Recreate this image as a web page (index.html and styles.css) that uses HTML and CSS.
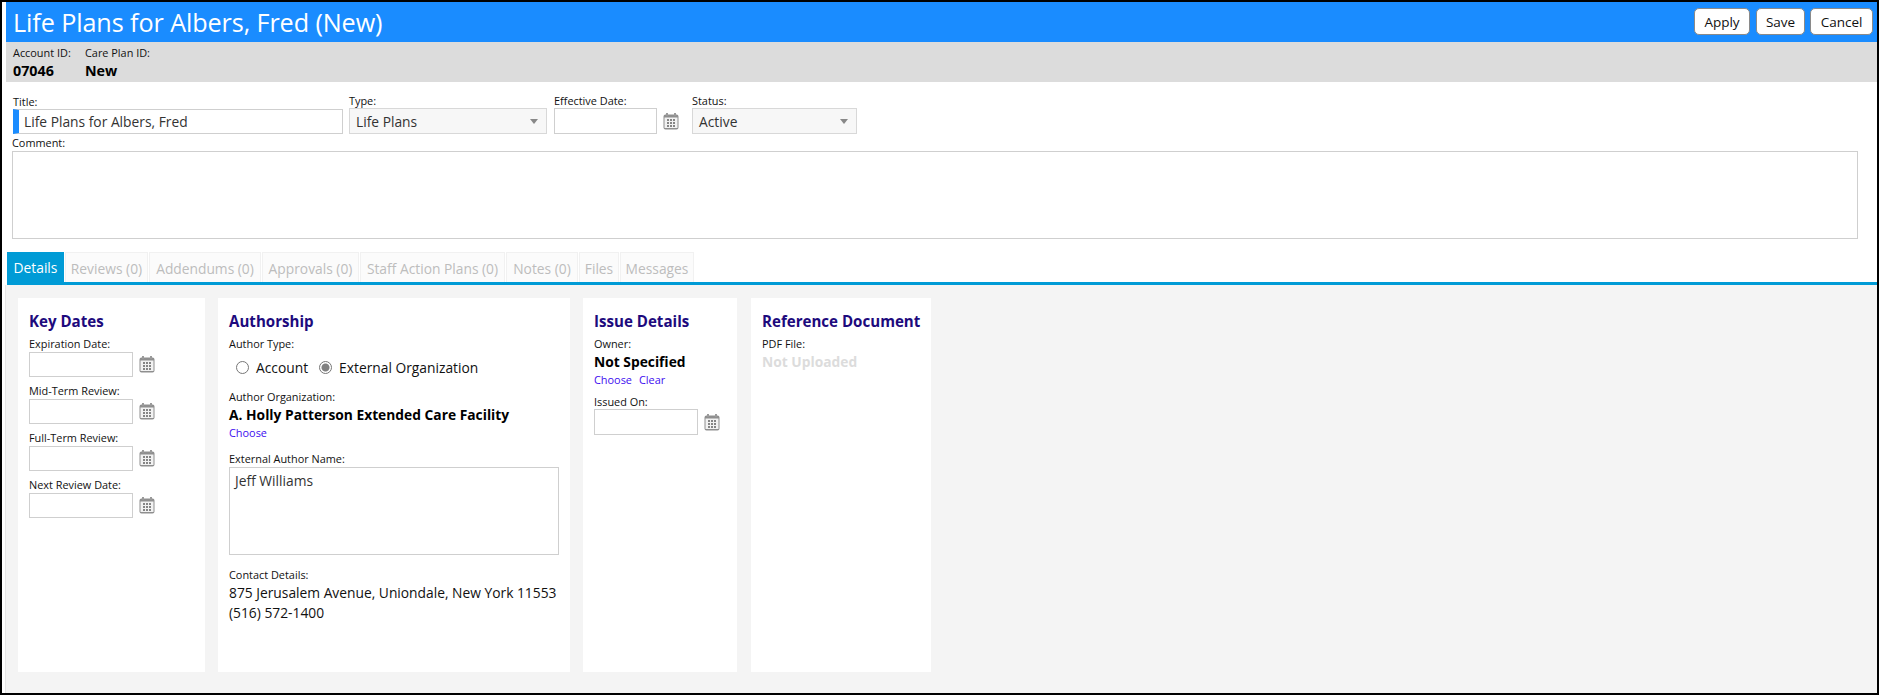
FILE: index.html
```html
<!DOCTYPE html>
<html lang="en">
<head>
<meta charset="utf-8">
<title>Life Plans for Albers, Fred (New)</title>
<link rel="stylesheet" href="styles.css">
</head>
<body>
<svg class="defs" width="0" height="0" aria-hidden="true">
  <symbol id="cal" viewBox="0 0 16 17">
    <path d="M2.5 1.5h11a2 2 0 0 1 2 2v11a2 2 0 0 1-2 2h-11a2 2 0 0 1-2-2v-11a2 2 0 0 1 2-2z" fill="#8f8f8f"/>
    <rect x="1.5" y="4.5" width="13" height="10.5" fill="#f2f2f2"/>
    <rect x="3" y="0" width="2" height="3" fill="#9a9a9a"/>
    <rect x="11" y="0" width="2" height="3" fill="#9a9a9a"/>
    <path d="M4 6h2v2H4zM7 6h2v2H7zM10 6h2v2h-2zM4 9h2v2H4zM7 9h2v2H7zM10 9h2v2h-2zM4 12h2v2H4zM7 12h2v2H7zM10 12h2v2h-2z" fill="#858585"/>
  </symbol>
</svg>
<div class="shell">
  <header class="topbar">
    <h1>Life Plans for Albers, Fred (New)</h1>
    <div class="actions">
      <button class="btn btn-apply">Apply</button>
      <button class="btn btn-save">Save</button>
      <button class="btn btn-cancel">Cancel</button>
    </div>
  </header>
  <section class="ids">
    <div class="id-col id-account"><span class="tiny">Account ID:</span><strong>07046</strong></div>
    <div class="id-col"><span class="tiny">Care Plan ID:</span><strong>New</strong></div>
  </section>
  <section class="form">
    <div class="form-row">
      <div class="field f-title"><label class="tiny">Title:</label><div class="input title-input">Life Plans for Albers, Fred</div></div>
      <div class="field f-type"><label class="tiny">Type:</label><div class="select">Life Plans<i class="caret"></i></div></div>
      <div class="field f-date"><label class="tiny">Effective Date:</label><div class="date-row"><div class="input date-input"></div><svg class="cal"><use href="#cal"/></svg></div></div>
      <div class="field f-status"><label class="tiny">Status:</label><div class="select">Active<i class="caret"></i></div></div>
    </div>
    <label class="tiny comment-label">Comment:</label>
    <div class="input comment"></div>
  </section>
  <nav class="tabs">
    <span class="tab active">Details</span>
    <span class="tab t1">Reviews (0)</span>
    <span class="tab t2">Addendums (0)</span>
    <span class="tab t3">Approvals (0)</span>
    <span class="tab t4">Staff Action Plans (0)</span>
    <span class="tab t5">Notes (0)</span>
    <span class="tab t6">Files</span>
    <span class="tab t7">Messages</span>
  </nav>
  <main class="content">
    <section class="panel p-dates">
      <h2>Key Dates</h2>
      <label class="tiny">Expiration Date:</label>
      <div class="date-row"><div class="input date-input"></div><svg class="cal"><use href="#cal"/></svg></div>
      <label class="tiny">Mid-Term Review:</label>
      <div class="date-row"><div class="input date-input"></div><svg class="cal"><use href="#cal"/></svg></div>
      <label class="tiny">Full-Term Review:</label>
      <div class="date-row"><div class="input date-input"></div><svg class="cal"><use href="#cal"/></svg></div>
      <label class="tiny">Next Review Date:</label>
      <div class="date-row"><div class="input date-input"></div><svg class="cal"><use href="#cal"/></svg></div>
    </section>
    <section class="panel p-auth">
      <h2>Authorship</h2>
      <label class="tiny">Author Type:</label>
      <div class="radios">
        <span class="radio"></span><span class="radio-text">Account</span>
        <span class="radio on"></span><span class="radio-text">External Organization</span>
      </div>
      <label class="tiny">Author Organization:</label>
      <div class="bold">A. Holly Patterson Extended Care Facility</div>
      <div class="links"><a>Choose</a></div>
      <label class="tiny ext-label">External Author Name:</label>
      <div class="input author-name">Jeff Williams</div>
      <label class="tiny contact-label">Contact Details:</label>
      <div class="contact">875 Jerusalem Avenue, Uniondale, New York 11553<br>(516) 572-1400</div>
    </section>
    <section class="panel p-issue">
      <h2>Issue Details</h2>
      <label class="tiny">Owner:</label>
      <div class="bold">Not Specified</div>
      <div class="links"><a>Choose</a><a>Clear</a></div>
      <label class="tiny issued">Issued On:</label>
      <div class="date-row"><div class="input date-input"></div><svg class="cal"><use href="#cal"/></svg></div>
    </section>
    <section class="panel p-ref">
      <h2>Reference Document</h2>
      <label class="tiny">PDF File:</label>
      <div class="bold muted">Not Uploaded</div>
    </section>
  </main>
</div>
</body>
</html>
```
FILE: styles.css
```css
* { box-sizing: border-box; }
html, body { margin: 0; height: 100%; overflow: hidden; }
body {
  background: #000;
  padding: 2px 2px 2px 2px;
  font-family: "Open Sans", "Noto Sans", sans-serif;
  color: #111;
}
.defs { display: block; height: 0; }
.shell {
  height: 691px;
  background: #fff;
  display: flex;
  flex-direction: column;
}
.topbar {
  height: 40px;
  flex: none;
  margin-left: 4px;
  background: #1a8cff;
  display: flex;
  justify-content: space-between;
  align-items: center;
  padding: 0 4px 0 7px;
}
.topbar h1 {
  margin: 0;
  font-size: 25.2px;
  font-weight: 400;
  color: #fff;
  letter-spacing: -0.1px;
  white-space: nowrap;
}
.actions { display: flex; gap: 6px; margin-top: -1px; }
.btn {
  height: 27px;
  border: 1px solid #8a8a8a;
  border-radius: 5px;
  background: #fff;
  color: #111;
  font: 13.5px "Open Sans", sans-serif;
  padding: 0;
}
.btn-apply { width: 56px; }
.btn-save { width: 49px; }
.btn-cancel { width: 63px; margin-left: -1px; }
.ids {
  height: 40px;
  flex: none;
  margin-left: 4px;
  background: #dcdcdc;
  display: flex;
  padding: 4px 0 0 7px;
}
.id-col { display: flex; flex-direction: column; }
.id-account { width: 72px; }
.id-col strong { font-size: 14.3px; line-height: 18px; margin-top: 2px; font-weight: 700; color: #000; }
.tiny {
  display: block;
  font-size: 10.9px;
  line-height: 14px;
  color: #111;
  white-space: nowrap;
}
.form { padding: 12px 18px 0 10px; height: 170px; flex: none; }
.form-row { display: flex; }
.field { display: flex; flex-direction: column; }
.f-title { width: 337px; padding-left: 1px; margin-top: 1px; }
.f-type { width: 205px; }
.f-date { width: 138px; }
.f-date .date-input { width: 103px; }
.f-status { width: 165px; }
.input {
  border: 1px solid #cfcfcf;
  background: #fff;
  font-size: 13.8px;
  color: #333;
}
.title-input {
  width: 330px;
  height: 25px;
  line-height: 23px;
  border-left: 6px solid #1a8cff;
  padding-left: 5px;
}
.select {
  height: 26px;
  border: 1px solid #d8d8d8;
  background: #f7f7f7;
  font-size: 13.8px;
  line-height: 23px;
  color: #333;
  padding-left: 6px;
  display: flex;
  justify-content: space-between;
  align-items: center;
  padding-right: 8px;
}
.f-type .select { width: 198px; }
.caret {
  width: 0;
  height: 0;
  border-left: 4.5px solid transparent;
  border-right: 4.5px solid transparent;
  border-top: 5px solid #888;
}
.date-row { display: flex; align-items: center; }
.date-input { width: 104px; height: 26px; }
.cal { width: 16px; height: 17px; margin-left: 6px; }
.comment-label { margin-top: 2px; }
.comment { height: 88px; margin-top: 1px; width: 1846px; }
.tabs {
  height: 33px;
  margin-left: 5px;
  display: flex;
  border-bottom: 3px solid #009bd6;
  font-size: 13.8px;
  flex: none;
}
.tab {
  height: 30px;
  line-height: 31px;
  padding: 0;
  text-align: center;
  color: #bdbdbd;
  background: #fbfbfb;
  border: 1px solid #f1f1f1;
  border-bottom: 0;
  margin-right: 1px;
  white-space: nowrap;
}
.tab.active { background: #009bd6; color: #fff; border: 0; width: 57px; line-height: 32px; }
.t1 { width: 83px; }
.t2 { width: 112px; }
.t3 { width: 97px; }
.t4 { width: 145px; }
.t5 { width: 72px; }
.t6 { width: 40px; }
.t7 { width: 74px; }
.content {
  flex: 1;
  margin-left: 3px;
  background: #f4f4f4;
  border-left: 1px solid #e6e6e6;
  display: flex;
  padding: 13px 0 21px 12px;
  gap: 13px;
}
.panel { background: #fff; padding: 13px 10px 0 11px; }
.panel h2 {
  margin: 0 0 6px;
  font-size: 15.1px;
  line-height: 20px;
  color: #1d0a7d;
  font-weight: 700;
  white-space: nowrap;
}
.p-dates { width: 187px; }
.p-auth { width: 352px; padding-left: 11px; }
.p-issue { width: 154px; padding-left: 11px; margin-right: 1px; }
.p-ref { width: 180px; padding-left: 11px; }
.p-dates .tiny { margin-bottom: 1px; }
.p-dates .date-row { margin-bottom: 7px; }
.p-dates .date-input { height: 25px; }
.radios { display: flex; align-items: center; height: 22px; margin: 5px 0 12px 7px; font-size: 13.8px; }
.radio {
  width: 13px;
  height: 13px;
  border: 1px solid #777;
  border-radius: 50%;
  background: #fff;
  margin-right: 7px;
}
.radio.on { background: radial-gradient(circle, #808080 0 3.5px, #fff 4.5px); }
.radio-text { margin-right: 11px; }
.bold { font-size: 13.8px; line-height: 19px; margin-top: 1px; font-weight: 700; color: #000; white-space: nowrap; }
.bold.muted { color: #dcdcdc; }
.links { font-size: 10.9px; line-height: 16px; margin-top: 1px; color: #3d0cf0; display: flex; gap: 7px; }
.ext-label { margin-top: 11px; }
.author-name {
  width: 330px;
  height: 88px;
  margin-top: 1px;
  padding: 3px 5px;
  line-height: 19px;
}
.contact-label { margin-top: 13px; }
.contact { font-size: 13.8px; line-height: 20px; color: #111; white-space: nowrap; margin-top: 1px; }
.issued { margin-top: 7px; }
```
